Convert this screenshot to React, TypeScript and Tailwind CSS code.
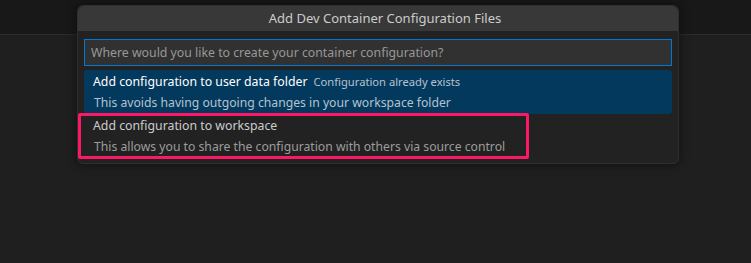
const font = { fontFamily: '"Noto Sans", "Open Sans", sans-serif' };

const items = [
  {
    label: "Add configuration to user data folder",
    note: "Configuration already exists",
    detail: "This avoids having outgoing changes in your workspace folder",
    active: true,
  },
  {
    label: "Add configuration to workspace",
    note: "",
    detail: "This allows you to share the configuration with others via source control",
    active: false,
  },
];

const App = () => {
  return (
    <div className="relative w-[751px] h-[263px] bg-[#1f1f1f] overflow-hidden" style={font}>
      {/* Title bar strip behind the picker */}
      <div className="h-[35px] bg-[#181818] border-b border-[#2b2b2b]" />

      {/* Quick pick */}
      <div className="absolute left-[77px] top-[5px] w-[602px] rounded-md border border-[#2f2f2f] bg-[#222222] shadow-[0_0_8px_2px_rgba(0,0,0,0.36)] pb-[5px]">
        <div className="h-[25px] rounded-t-md bg-[#383838] flex items-center justify-center pl-[14px] pt-[1px] text-[13px] text-[#cccccc]">
          Add Dev Container Configuration Files
        </div>

        <div className="px-[6px] pt-[8px]">
          <div className="h-[27px] border border-[#0078d4] bg-[#313131] flex items-center px-[6px] pt-[2px] text-[12.3px] text-[#989898]">
            Where would you like to create your container configuration?
          </div>

          <div className="mt-[4px]">
            {items.map((item) => (
              <div
                key={item.label}
                className={
                  item.active
                    ? "h-[44px] rounded-[3px] bg-[#04395e] pl-[9px] flex flex-col"
                    : "h-[44px] rounded-[3px] pl-[9px] flex flex-col"
                }
              >
                <div className="h-[22px] flex items-center gap-[6px] pt-[2px]">
                  <span className={item.active ? "text-[12.3px] text-white" : "text-[12.3px] text-[#cccccc]"}>
                    {item.label}
                  </span>
                  {item.note && <span className="text-[11.2px] text-[#b3c3cf]">{item.note}</span>}
                </div>
                <div
                  className={
                    item.active
                      ? "h-[22px] flex items-center pl-[1px] text-[12.2px] text-[#b3c3cf]"
                      : "h-[22px] flex items-center pl-[1px] text-[12.2px] text-[#9d9d9d]"
                  }
                >
                  {item.detail}
                </div>
              </div>
            ))}
          </div>
        </div>
      </div>

      {/* Highlight annotation */}
      <div className="absolute left-[78px] top-[113px] w-[451px] h-[46px] border-[3px] border-[#fd1866] rounded-[2px]" />
    </div>
  );
};

export default App;
